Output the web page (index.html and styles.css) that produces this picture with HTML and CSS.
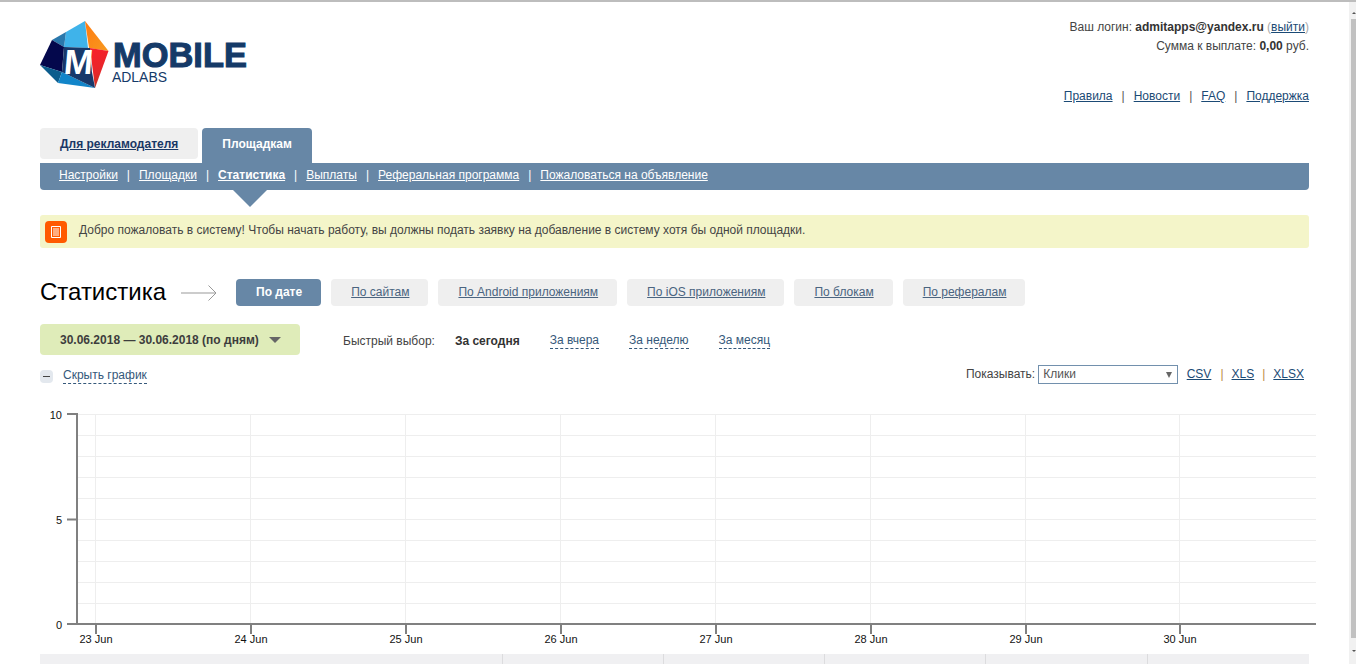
FILE: index.html
```html
<!DOCTYPE html>
<html lang="ru">
<head>
<meta charset="utf-8">
<title>Статистика</title>
<link rel="stylesheet" href="styles.css">
</head>
<body>
<div class="app">
  <div class="page">
    <header class="top">
      <a class="logo" href="#" aria-label="Mobile Adlabs">
        <svg width="215" height="75" viewBox="36 18 215 75">
          <defs>
            <linearGradient id="org" x1="0" y1="0" x2="1" y2="1"><stop offset="0" stop-color="#ff7a10"/><stop offset="1" stop-color="#f79a20"/></linearGradient>
            <linearGradient id="red" x1="0.3" y1="0" x2="0.6" y2="1"><stop offset="0" stop-color="#f8202a"/><stop offset="0.6" stop-color="#e6262a"/><stop offset="1" stop-color="#b83a20"/></linearGradient>
          </defs>
          <polygon points="85,21 66,32 64,47 88,48" fill="#3fb3ea"/>
          <polygon points="52,40 66,32 64,47" fill="#2a78ac"/>
          <polygon points="85,21 108.5,51 89,48" fill="url(#org)"/>
          <polygon points="108.5,51 95,88 90,48" fill="url(#red)"/>
          <polygon points="52,40 64,47 62,72 40,65" fill="#04084c"/>
          <polygon points="40,65 62,72 58,83" fill="#0b5d8d"/>
          <polygon points="62,72 58,83 95,88" fill="#1285c9"/>
          <polygon points="62,72 92,72 95,88" fill="#17386a"/>
          <polygon points="64,47 90,48 92,73 62,72" fill="#17386a"/>
          <text class="logo-m" transform="translate(63 74) skewX(-5)">M</text>
          <text class="logo-main" transform="translate(113 67) scale(.957 1)">MOBILE</text>
          <text class="logo-sub" transform="translate(112 82) scale(.93 1)">ADLABS</text>
        </svg>
      </a>
      <div class="account">
        <p class="account-line">Ваш логин: <b>admitapps@yandex.ru</b> <span class="muted">(<a href="#">выйти</a>)</span></p>
        <p class="account-line">Сумма к выплате: <b>0,00</b> руб.</p>
        <nav class="toplinks"><a href="#">Правила</a><span>|</span><a href="#">Новости</a><span>|</span><a href="#">FAQ</a><span>|</span><a href="#">Поддержка</a></nav>
      </div>
    </header>

    <div class="tabs">
      <a class="tab" href="#">Для рекламодателя</a>
      <span class="tab tab-active">Площадкам</span>
    </div>
    <nav class="subnav">
      <a href="#">Настройки</a><span>|</span><a href="#">Площадки</a><span>|</span><a class="current" href="#">Статистика</a><span>|</span><a href="#">Выплаты</a><span>|</span><a href="#">Реферальная программа</a><span>|</span><a href="#">Пожаловаться на объявление</a>
    </nav>

    <div class="notice">
      <span class="notice-icon">
        <svg width="10" height="12" viewBox="0 0 10 12"><path d="M.5.5h9v11h-9z" fill="none" stroke="#fff"/><path d="M2 3h6M2 5h6M2 7h6M2 9h6" stroke="#fff"/></svg>
      </span>
      <span>Добро пожаловать в систему! Чтобы начать работу, вы должны подать заявку на добавление в систему хотя бы одной площадки.</span>
    </div>

    <div class="title-row">
      <h1>Статистика</h1>
      <svg class="title-arrow" width="36" height="16" viewBox="0 0 36 16"><path d="M0 8h35M27.500 .5 35 8l-7.500 7.500" fill="none" stroke="#999"/></svg>
      <div class="filters">
        <a class="filter filter-active" href="#">По дате</a>
        <a class="filter" href="#">По сайтам</a>
        <a class="filter" href="#">По Android приложениям</a>
        <a class="filter" href="#">По iOS приложениям</a>
        <a class="filter" href="#">По блокам</a>
        <a class="filter" href="#">По рефералам</a>
      </div>
    </div>

    <div class="date-row">
      <button class="date" type="button">30.06.2018 — 30.06.2018 (по дням)<i class="caret"></i></button>
      <span class="quick-label">Быстрый выбор:</span>
      <b class="quick-now">За сегодня</b>
      <a class="dashed" href="#">За вчера</a>
      <a class="dashed" href="#">За неделю</a>
      <a class="dashed" href="#">За месяц</a>
    </div>

    <div class="tools">
      <div class="toggle"><span class="toggle-box"></span><a class="dashed" href="#">Скрыть график</a></div>
      <div class="show">
        <span>Показывать:</span>
        <div class="select"><span>Клики</span><i class="select-caret"></i></div>
        <nav class="exports"><a href="#">CSV</a><span>|</span><a href="#">XLS</a><span>|</span><a href="#">XLSX</a></nav>
      </div>
    </div>

    <svg class="chart" width="1276" height="246" viewBox="40 408 1276 246">
      <g class="grid">
        <path d="M78 414.500H1316M78 435.500H1316M78 456.500H1316M78 477.500H1316M78 498.500H1316M78 519.500H1316M78 540.500H1316M78 561.500H1316M78 582.500H1316M78 603.500H1316"/>
        <path d="M95.500 414V624M250.500 414V624M405.500 414V624M560.500 414V624M715.500 414V624M870.500 414V624M1025.500 414V624M1179.500 414V624"/>
      </g>
      <g class="axis">
        <path d="M77 414V625M67 414H78M67 519.500H78M67 624H1316"/>
        <path d="M96 624V634M251 624V634M406 624V634M561 624V634M716 624V634M871 624V634M1026 624V634M1180 624V634"/>
      </g>
      <g class="ylabels">
        <text x="62" y="419">10</text><text x="62" y="524">5</text><text x="62" y="629">0</text>
      </g>
      <g class="xlabels">
        <text x="96" y="643">23 Jun</text><text x="251" y="643">24 Jun</text><text x="406" y="643">25 Jun</text><text x="561" y="643">26 Jun</text><text x="716" y="643">27 Jun</text><text x="871" y="643">28 Jun</text><text x="1026" y="643">29 Jun</text><text x="1180" y="643">30 Jun</text>
      </g>
    </svg>

    <div class="table-head">
      <div class="th th-first"></div><div class="th"></div><div class="th"></div><div class="th"></div><div class="th"></div><div class="th"></div>
    </div>
  </div>
  <div class="scrollbar">
    <i class="arrow-up"></i>
    <div class="thumb"></div>
    <i class="arrow-down"></i>
  </div>
</div>
</body>
</html>
```
FILE: styles.css
```css
* { box-sizing: border-box; }
html, body { margin: 0; height: 100%; overflow: hidden; background: #fff; }
body { font: 12px/15px "Liberation Sans", Arial, sans-serif; color: #444; }
a { color: #1b4a75; }
p { margin: 0; }

.app { display: flex; height: 664px; border-top: 2px solid #bdbdbd; }
.page { flex: 1; min-width: 0; padding: 0 40px; overflow: hidden; }

.top { display: flex; justify-content: space-between; height: 126px; }
.logo { display: block; margin-top: 16px; height: 75px; }
.logo svg { display: block; margin-left: -4px; overflow: visible; }
.logo-main { font: 700 36px "Liberation Sans", sans-serif; fill: #153a68; stroke: #153a68; stroke-width: 1.1px; }
.logo-sub { font: 400 15px "Liberation Sans", sans-serif; fill: #153a68; }
.logo-m { font: 700 35px "Liberation Sans", sans-serif; fill: #fff; }

.account { text-align: right; padding-top: 16px; }
.account-line { line-height: 19px; }
.account b { color: #333; }
.muted { color: #aaa; }
.toplinks { display: flex; justify-content: flex-end; gap: 9px; margin-top: 33px; }
.toplinks span { color: #555; }

.tabs { display: flex; gap: 4px; height: 35px; }
.tab { display: block; height: 31px; line-height: 33px; padding: 0 20px; border-radius: 4px; background: #efefef; font-weight: 700; color: #1a3866; }
.tab-active { height: 35px; padding: 0 20px; border-radius: 4px 4px 0 0; background: #6787a6; color: #fff; }

.subnav { position: relative; display: flex; gap: 9px; height: 27px; padding: 0 0 2px 19px; align-items: center; background: #6787a6; border-radius: 0 0 4px 4px; color: #fff; }
.subnav a { color: #fff; }
.subnav .current { font-weight: 700; }
.subnav::after { content: ""; position: absolute; left: 193px; top: 27px; border: 17px solid transparent; border-top-color: #6787a6; border-bottom: 0; }

.notice { display: flex; align-items: center; gap: 12px; height: 33px; margin-top: 25px; padding: 0 0 2px 5px; background: #f4f5c9; border-radius: 3px; color: #444; }
.notice-icon { display: flex; align-items: center; justify-content: center; width: 22px; height: 22px; margin-top: 2px; background: #ff5a00; border-radius: 4px; }

.title-row { display: flex; align-items: center; height: 27px; margin-top: 31px; }
h1 { margin: 0 0 2px; font-size: 24px; font-weight: 400; line-height: 27px; color: #000; width: 141px; }
.title-arrow { display: block; }
.filters { display: flex; gap: 10px; margin-left: 19px; }
.filter { display: block; height: 27px; line-height: 27px; padding: 0 19px 0 20px; border-radius: 4px; background: #efefef; color: #4a6480; }
.filter-active { background: #6787a6; color: #fff; font-weight: 700; text-decoration: none; }

.date-row { display: flex; align-items: center; height: 31px; margin-top: 18px; padding-top: 3px; }
.date { display: flex; align-items: center; flex: none; width: 260px; height: 31px; margin-top: -3px; padding: 0 0 0 20px; border: 0; border-radius: 4px; background: #dfecb9; font: 700 12px "Liberation Sans", sans-serif; color: #3d3d3d; }
.caret { margin-left: 10px; border: 6px solid transparent; border-top: 6px solid #666; border-bottom: 0; }
.quick-label { margin-left: 43px; }
.quick-now { margin-left: 20px; color: #333; }
.dashed { color: #35587a; text-decoration: none; border-bottom: 1px dashed #35587a; }
.date-row .dashed { margin-left: 30px; }

.tools { display: flex; justify-content: space-between; align-items: center; height: 20px; margin-top: 11px; padding-right: 5px; }
.toggle { display: flex; align-items: center; gap: 10px; }
.toggle-box { position: relative; display: block; width: 13px; height: 13px; border-radius: 4px; background: #e3e8ee; }
.toggle-box::after { content: ""; position: absolute; left: 3px; top: 6px; width: 7px; height: 1px; background: #444; }
.show { display: flex; align-items: center; margin-bottom: 4px; }
.select { position: relative; width: 140px; height: 19px; margin-left: 3px; padding-left: 4px; line-height: 17px; border: 1px solid #7290ad; color: #555; }
.select-caret { position: absolute; right: 5px; top: 6px; border: 3.5px solid transparent; border-top: 6px solid #666; border-bottom: 0; }
.exports { display: flex; gap: 8px; margin-left: 8.500px; }
.exports a:first-child { margin-right: 1px; }
.exports span { color: #b98a45; }

.chart { display: block; margin-top: 22px; margin-right: -7px; }
.grid path { fill: none; stroke: #eeeeee; stroke-width: 1px; }
.axis path { fill: none; stroke: #808080; stroke-width: 2px; }
.ylabels text { font: 11px "Liberation Sans", sans-serif; fill: #111; text-anchor: end; }
.xlabels text { font: 11px "Liberation Sans", sans-serif; fill: #111; text-anchor: middle; }

.table-head { display: grid; grid-template-columns: 462px 161px 161px 161px 162px 1fr; height: 20px; background: #f0f0f2; }
.th { border-left: 1px solid #dcdcde; }
.th-first { border-left: 0; }

.scrollbar { position: relative; width: 7px; background: #f1f1f1; display: flex; flex-direction: column; align-items: flex-end; }
.thumb { width: 5px; height: 619px; margin-top: 5px; background: #c1c1c1; }
.arrow-up { display: block; margin-top: 10px; border: 2px solid transparent; border-bottom: 2px solid #555; border-top: 0; }
.arrow-down { display: block; margin-top: 12px; border: 2px solid transparent; border-top: 2px solid #555; border-bottom: 0; }
```
